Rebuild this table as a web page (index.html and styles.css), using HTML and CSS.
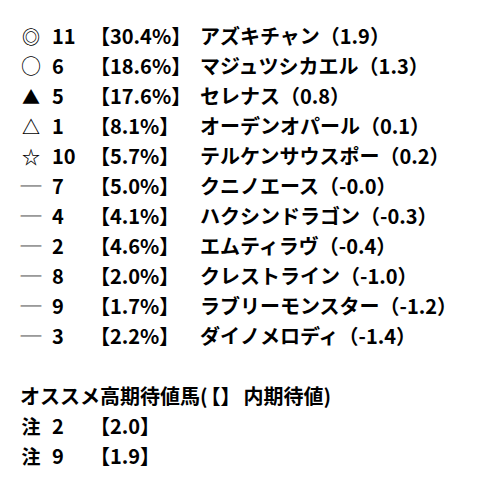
FILE: index.html
```html
<!DOCTYPE html>
<html lang="ja">
<head>
<meta charset="utf-8">
<link rel="stylesheet" href="styles.css">
</head>
<body>
<div class="page">
  <div class="table">
    <span class="mark small">◎</span><span class="num">11</span><span class="rate">【30.4%】</span><span class="name">アズキチャン（1.9）</span>
    <span class="mark">○</span><span class="num">6</span><span class="rate">【18.6%】</span><span class="name">マジュツシカエル（1.3）</span>
    <span class="mark small">▲</span><span class="num">5</span><span class="rate">【17.6%】</span><span class="name">セレナス（0.8）</span>
    <span class="mark small">△</span><span class="num">1</span><span class="rate">【8.1%】</span><span class="name">オーデンオパール（0.1）</span>
    <span class="mark small">☆</span><span class="num">10</span><span class="rate">【5.7%】</span><span class="name">テルケンサウスポー（0.2）</span>
    <span class="mark dash">ー</span><span class="num">7</span><span class="rate">【5.0%】</span><span class="name">クニノエース（-0.0）</span>
    <span class="mark dash">ー</span><span class="num">4</span><span class="rate">【4.1%】</span><span class="name">ハクシンドラゴン（-0.3）</span>
    <span class="mark dash">ー</span><span class="num">2</span><span class="rate">【4.6%】</span><span class="name">エムティラヴ（-0.4）</span>
    <span class="mark dash">ー</span><span class="num">8</span><span class="rate">【2.0%】</span><span class="name">クレストライン（-1.0）</span>
    <span class="mark dash">ー</span><span class="num">9</span><span class="rate">【1.7%】</span><span class="name">ラブリーモンスター（-1.2）</span>
    <span class="mark dash">ー</span><span class="num">3</span><span class="rate">【2.2%】</span><span class="name">ダイノメロディ（-1.4）</span>
  </div>
  <p class="heading">オススメ高期待値馬(<span class="brk">【】</span>内期待値)</p>
  <div class="table">
    <span class="mark note">注</span><span class="num">2</span><span class="rate">【2.0】</span><span class="name"></span>
    <span class="mark note">注</span><span class="num">9</span><span class="rate">【1.9】</span><span class="name"></span>
  </div>
</div>
</body>
</html>
```

FILE: styles.css
```css
html, body {
  margin: 0;
  padding: 0;
  background: #ffffff;
}

.page {
  padding: 21px 20px 0 20px;
  font-family: "Noto Sans CJK JP", sans-serif;
  font-size: 20px;
  font-weight: bold;
  line-height: 30px;
  color: #000000;
}

.table {
  display: grid;
  grid-template-columns: 30px 40px 110px 1fr;
  grid-auto-rows: 30px;
}

.mark {
  width: 22px;
  text-align: center;
  font-weight: normal;
}

.mark.small {
  font-size: 18px;
  font-weight: bold;
}

.mark.note {
  font-weight: bold;
  font-size: 19px;
}

.dash {
  color: #9a9a9a;
  display: inline-block;
  transform: scaleX(1.3);
  font-weight: normal;
}

.num {
  padding-left: 2px;
  white-space: nowrap;
}

.rate,
.name {
  white-space: nowrap;
}

.heading {
  margin: 30px 0 0 0;
  white-space: nowrap;
}

.brk {
  margin: 0 3px;
}
```
